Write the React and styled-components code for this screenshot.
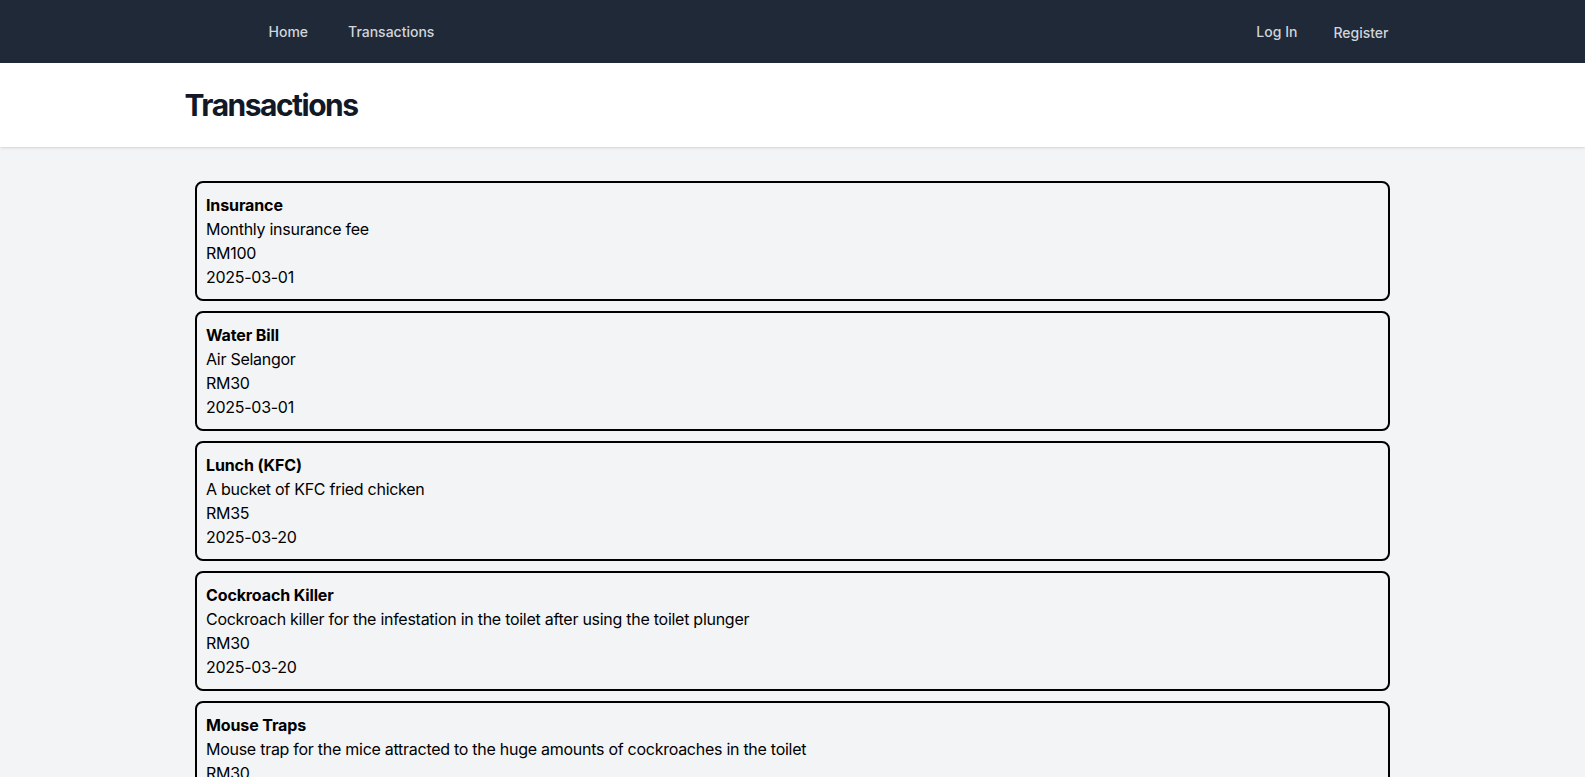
import React from 'react';
import styled, { createGlobalStyle } from 'styled-components';

const transactions = [
  { title: 'Insurance', description: 'Monthly insurance fee', amount: 'RM100', date: '2025-03-01' },
  { title: 'Water Bill', description: 'Air Selangor', amount: 'RM30', date: '2025-03-01' },
  { title: 'Lunch (KFC)', description: 'A bucket of KFC fried chicken', amount: 'RM35', date: '2025-03-20' },
  {
    title: 'Cockroach Killer',
    description: 'Cockroach killer for the infestation in the toilet after using the toilet plunger',
    amount: 'RM30',
    date: '2025-03-20',
  },
  {
    title: 'Mouse Traps',
    description: 'Mouse trap for the mice attracted to the huge amounts of cockroaches in the toilet',
    amount: 'RM30',
    date: '2025-03-21',
  },
];

const App = () => {
  return (
    <>
      <GlobalStyle />
      <Page>
        <Nav>
          <NavInner>
            <NavGroup>
              <Logo />
              <NavLinks>
                <NavLink href="#">Home</NavLink>
                <NavLink href="#">Transactions</NavLink>
              </NavLinks>
            </NavGroup>
            <NavLinks $tight>
              <NavLink href="#">Log In</NavLink>
              <NavLink href="#" $lowered>
                Register
              </NavLink>
            </NavLinks>
          </NavInner>
        </Nav>
        <Header>
          <HeaderInner>
            <Title>Transactions</Title>
          </HeaderInner>
        </Header>
        <Main>
          <List>
            {transactions.map((item, index) => (
              <Card key={index}>
                <strong>{item.title}</strong>
                <span>{item.description}</span>
                <span>{item.amount}</span>
                <span>{item.date}</span>
              </Card>
            ))}
          </List>
        </Main>
      </Page>
    </>
  );
};

export default App;

const GlobalStyle = createGlobalStyle`
  * {
    box-sizing: border-box;
  }
  html, body {
    margin: 0;
    padding: 0;
    background: #f3f4f6;
    font-family: Inter, "Noto Sans", sans-serif;
    -webkit-font-smoothing: antialiased;
  }
`;

const Page = styled.div`
  min-height: 100vh;
  background: #f3f4f6;
`;

const Nav = styled.nav`
  background: #1f2937;
`;

const NavInner = styled.div`
  max-width: 1280px;
  margin: 0 auto;
  padding: 0 32px;
  height: 63px;
  display: flex;
  align-items: center;
  justify-content: space-between;
`;

const NavGroup = styled.div`
  display: flex;
  align-items: center;
`;

const Logo = styled.div`
  width: 32px;
  height: 32px;
  margin-right: 40px;
`;

const NavLinks = styled.div`
  display: flex;
  align-items: center;
  gap: ${(p) => (p.$tight ? '12px' : '16px')};
`;

const NavLink = styled.a`
  padding: 8px 12px;
  border-radius: 6px;
  font-size: 14px;
  line-height: 20px;
  font-weight: 500;
  color: #d1d5db;
  text-decoration: none;
  position: relative;
  top: ${(p) => (p.$lowered ? '1px' : '0')};
`;

const Header = styled.header`
  background: #ffffff;
  box-shadow: 0 1px 3px 0 rgba(0, 0, 0, 0.1), 0 1px 2px -1px rgba(0, 0, 0, 0.1);
  position: relative;
`;

const HeaderInner = styled.div`
  max-width: 1280px;
  margin: 0 auto;
  padding: 24px 32px;
`;

const Title = styled.h1`
  margin: 0;
  font-size: 30px;
  line-height: 36px;
  font-weight: 700;
  letter-spacing: -1.5px;
  color: #111827;
`;

const Main = styled.main`
  max-width: 1280px;
  margin: 0 auto;
  padding: 34px 32px 24px;
`;

const List = styled.div`
  display: flex;
  flex-direction: column;
  gap: 10px;
  padding: 0 10.5px;
`;

const Card = styled.div`
  display: flex;
  flex-direction: column;
  border: 2px solid #000;
  border-radius: 8px;
  padding: 10px 9px;
  font-size: 16px;
  line-height: 24px;
  letter-spacing: -0.27px;
  color: #000;

  strong {
    font-weight: 700;
    letter-spacing: -0.12px;
  }
`;
